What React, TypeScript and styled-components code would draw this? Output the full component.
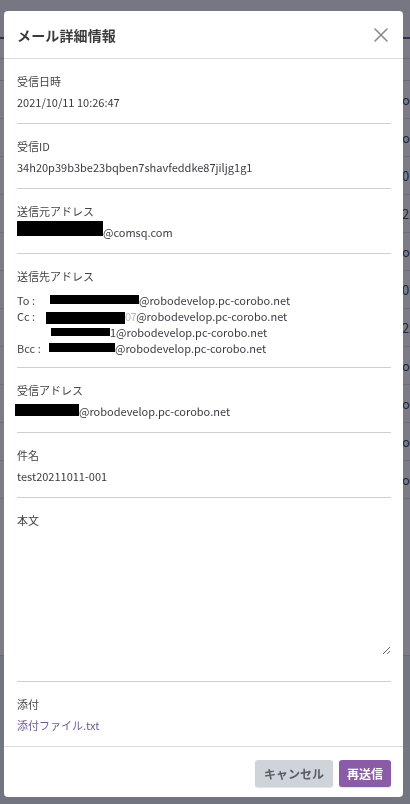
import styled, { createGlobalStyle } from 'styled-components';

const GlobalStyle = createGlobalStyle`
    html, body {
        margin: 0;
        padding: 0;
        background: #eceef2;
    }
    body {
        font-family: 'Noto Sans CJK JP', 'Noto Sans', sans-serif;
        color: #333;
    }
`;

const backgroundRows = ['ol', 'ol', '07', '2@', 'ol', '07', '2@', 'ol', 'ol', 'on', 'on'];

interface RedactProps {
    $w: number,
    $h: number,
    $shift?: number,
    $drop?: number
}

const App = () => {
    return(
        <>
            <GlobalStyle />
            <Page>
                <TopBar />
                <Toolbar />
                <Table>
                    <TableHead />
                    {backgroundRows.map((tail, i) => (
                        <TableRow key={i}>
                            <span />
                            <span className="cell">{tail}robodevelop.pc-corobo.net</span>
                        </TableRow>
                    ))}
                </Table>
            </Page>
            <Overlay>
                <Modal>
                    <ModalHeader>
                        <h2>メール詳細情報</h2>
                        <CloseButton aria-label="close">
                            <svg width="14" height="14" viewBox="0 0 14 14">
                                <path d="M1 1 L13 13 M13 1 L1 13" stroke="#8a8a8a" strokeWidth="1.6" strokeLinecap="round" />
                            </svg>
                        </CloseButton>
                    </ModalHeader>
                    <ModalBody>
                        <Section>
                            <Label>受信日時</Label>
                            <Value>2021/10/11 10:26:47</Value>
                        </Section>
                        <Section>
                            <Label>受信ID</Label>
                            <Value>34h20p39b3be23bqben7shavfeddke87jiljg1g1</Value>
                        </Section>
                        <Section>
                            <Label>送信元アドレス</Label>
                            <Value>
                                <Redact $w={86} $h={15} $drop={-1.5} />@comsq.com
                            </Value>
                        </Section>
                        <Section>
                            <Label>送信先アドレス</Label>
                            <AddressGrid>
                                <span className="kind">To :</span>
                                <AddressLine><Redact $w={89} $h={9} $shift={4} $drop={-1.5} />@robodevelop.pc-corobo.net</AddressLine>
                                <span className="kind">Cc :</span>
                                <AddressLine><Redact $w={79} $h={12} $drop={3} /><Faded>07</Faded>@robodevelop.pc-corobo.net</AddressLine>
                                <span />
                                <AddressLine><Redact $w={59} $h={8} $shift={5} $drop={-1} />1@robodevelop.pc-corobo.net</AddressLine>
                                <span className="kind">Bcc :</span>
                                <AddressLine><Redact $w={66} $h={9} $shift={3} $drop={-1} />@robodevelop.pc-corobo.net</AddressLine>
                            </AddressGrid>
                        </Section>
                        <Section>
                            <Label>受信アドレス</Label>
                            <Value>
                                <Redact $w={64} $h={12} $shift={-2} $drop={0} />@robodevelop.pc-corobo.net
                            </Value>
                        </Section>
                        <Section>
                            <Label>件名</Label>
                            <Value>test20211011-001</Value>
                        </Section>
                        <Section $bottom={26}>
                            <Label>本文</Label>
                            <BodyText readOnly defaultValue="" />
                        </Section>
                        <Section $last>
                            <Label>添付</Label>
                            <Attachment>添付ファイル.txt</Attachment>
                        </Section>
                    </ModalBody>
                    <ModalFooter>
                        <Button $kind="cancel">キャンセル</Button>
                        <Button $kind="primary">再送信</Button>
                    </ModalFooter>
                </Modal>
            </Overlay>
        </>
    );
}

const Page = styled.div`
    width: 100%;
    height: 804px;
    display: flex;
    flex-direction: column;
    background: #eceef2;
`;

const TopBar = styled.div`
    height: 37px;
    background: #f3f3f6;
    border-bottom: 2px solid #5b3f8f;
`;

const Toolbar = styled.div`
    height: 19px;
    background: #ffffff;
`;

const Table = styled.div`
    height: 597px;
    background: #ffffff;
    display: flex;
    flex-direction: column;
    border-bottom: 1px solid #d4d6dc;
`;

const TableHead = styled.div`
    height: 21px;
    border-top: 1px solid #d4d6dc;
    border-bottom: 1px solid #d4d6dc;
`;

const TableRow = styled.div`
    height: 37px;
    border-bottom: 1px solid #dcdee3;
    display: grid;
    grid-template-columns: 402px 1fr;
    align-items: center;
    overflow: hidden;
    white-space: nowrap;

    .cell {
        font-size: 13px;
        color: #333;
    }
`;

const Overlay = styled.div`
    position: fixed;
    inset: 0;
    background: rgba(28, 30, 46, 0.58);
    display: flex;
    align-items: flex-start;
    justify-content: flex-start;
    padding: 11px 0 0 4px;
`;

const Modal = styled.div`
    width: 399px;
    height: 786px;
    background: #ffffff;
    border-radius: 4px;
    display: flex;
    flex-direction: column;
    overflow: hidden;
`;

const ModalHeader = styled.div`
    height: 47px;
    border-bottom: 1px solid #dcdcdc;
    display: flex;
    align-items: center;
    justify-content: space-between;
    padding: 0 14px 0 13px;
    flex-shrink: 0;

    h2 {
        margin: 0;
        font-size: 14px;
        font-weight: 700;
        color: #3b3b3b;
        letter-spacing: 0.01em;
    }
`;

const CloseButton = styled.button`
    border: none;
    background: none;
    padding: 0;
    width: 16px;
    height: 16px;
    display: flex;
    align-items: center;
    justify-content: center;
    cursor: pointer;
`;

const ModalBody = styled.div`
    flex: 1;
    padding: 0 12px 0 13px;
    display: flex;
    flex-direction: column;
`;

const Section = styled.div<{ $last?: boolean, $bottom?: number }>`
    padding: 13px 0 ${(p) => p.$last ? 0 : (p.$bottom ?? 11)}px;
    border-bottom: ${(p) => p.$last ? 'none' : '1px solid #cfcfd2'};
    display: flex;
    flex-direction: column;
    gap: 2px;
`;

const Label = styled.p`
    margin: 0;
    font-size: 11px;
    line-height: 18px;
    color: #444;
`;

const Value = styled.p`
    margin: 0;
    font-size: 11px;
    line-height: 20px;
    color: #3a3a44;
    white-space: nowrap;
`;

/* black marker over hidden parts of addresses; zero-height margin box keeps the line height */
const Redact = styled.span<RedactProps>`
    display: inline-block;
    width: ${(p) => p.$w}px;
    height: ${(p) => p.$h}px;
    margin-top: ${(p) => -p.$h}px;
    margin-left: ${(p) => p.$shift ?? 0}px;
    vertical-align: ${(p) => -(p.$drop ?? 0)}px;
    background: #000;
`;

const Faded = styled.span`
    color: #b8b8bf;
    letter-spacing: -0.5px;
`;

const AddressGrid = styled.div`
    display: grid;
    grid-template-columns: 29px 1fr;
    margin-top: 5px;
    font-size: 11px;
    line-height: 16px;
    color: #3a3a44;
    white-space: nowrap;

    .kind {
        font-size: 11px;
        color: #444;
    }
`;

const AddressLine = styled.span`
    display: block;
`;

const BodyText = styled.textarea`
    margin-top: 0;
    height: 124px;
    width: 100%;
    box-sizing: border-box;
    border: none;
    outline: none;
    resize: vertical;
    padding: 0;
    font-family: inherit;
    font-size: 11px;
    background: transparent;
`;

const Attachment = styled.a`
    font-size: 11px;
    line-height: 20px;
    color: #6f5a94;
    text-decoration: none;
`;

const ModalFooter = styled.div`
    height: 51px;
    border-top: 1px solid #dcdcdc;
    display: flex;
    justify-content: flex-end;
    align-items: flex-start;
    gap: 6px;
    padding: 13px 12px 0;
    box-sizing: border-box;
    flex-shrink: 0;
`;

const Button = styled.button<{ $kind: 'cancel' | 'primary' }>`
    height: 27px;
    border: none;
    border-radius: 3px;
    padding: 0 ${(p) => p.$kind === 'cancel' ? 9 : 8}px;
    font-family: inherit;
    font-size: 12px;
    font-weight: 700;
    background: ${(p) => p.$kind === 'cancel' ? '#cfd3da' : '#8a5ba6'};
    color: ${(p) => p.$kind === 'cancel' ? '#5a5d66' : '#ffffff'};
    box-shadow: 0 1px 1px rgba(0, 0, 0, 0.12);
    cursor: pointer;
`;

export default App;
